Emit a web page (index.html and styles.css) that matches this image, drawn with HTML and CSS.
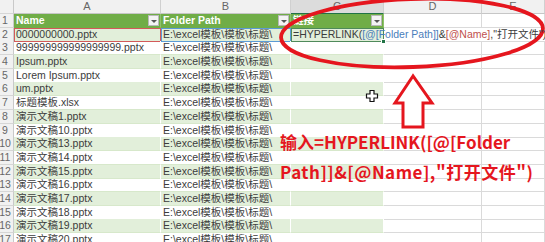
FILE: index.html
```html
<!DOCTYPE html>
<html lang="zh-CN">
<head>
  <meta charset="UTF-8" />
  <title>HYPERLINK</title>
  <link rel="stylesheet" href="styles.css">
</head>
<body>

<div class="sheet">
  <div class="row col-head">
    <div class="num corner"></div>
    <div class="letter">A</div>
    <div class="letter">B</div>
    <div class="letter active">C</div>
    <div class="letter">D</div>
    <div class="letter">E</div>
  </div>

  <div class="row tbl-head">
    <div class="num">1</div>
    <div class="cell th">Name<span class="drop"></span></div>
    <div class="cell th">Folder Path<span class="drop"></span></div>
    <div class="cell th">链接<span class="drop"></span></div>
    <div class="cell"></div>
    <div class="cell"></div>
  </div>

  <div class="row band">
    <div class="num">2</div>
    <div class="cell t ref-name">0000000000.pptx</div>
    <div class="cell t ref-path">E:\excel模板\模板\标题\</div>
    <div class="cell t editing">=HYPERLINK(<span class="blue">[@[Folder Path]]</span>&amp;<span class="red">[@Name]</span>,"打开文件")<span class="handle"></span></div>
    <div class="cell no-line"></div>
    <div class="cell no-line"></div>
  </div>

  <div class="row">
    <div class="num">3</div>
    <div class="cell t">999999999999999999.pptx</div>
    <div class="cell t">E:\excel模板\模板\标题\</div>
    <div class="cell t"></div>
    <div class="cell"></div>
    <div class="cell"></div>
  </div>
  <div class="row band">
    <div class="num">4</div>
    <div class="cell t">Ipsum.pptx</div>
    <div class="cell t">E:\excel模板\模板\标题\</div>
    <div class="cell t"></div>
    <div class="cell"></div>
    <div class="cell"></div>
  </div>
  <div class="row">
    <div class="num">5</div>
    <div class="cell t">Lorem Ipsum.pptx</div>
    <div class="cell t">E:\excel模板\模板\标题\</div>
    <div class="cell t"></div>
    <div class="cell"></div>
    <div class="cell"></div>
  </div>
  <div class="row band">
    <div class="num">6</div>
    <div class="cell t">um.pptx</div>
    <div class="cell t">E:\excel模板\模板\标题\</div>
    <div class="cell t"></div>
    <div class="cell"></div>
    <div class="cell"></div>
  </div>
  <div class="row">
    <div class="num">7</div>
    <div class="cell t">标题模板.xlsx</div>
    <div class="cell t">E:\excel模板\模板\标题\</div>
    <div class="cell t"></div>
    <div class="cell"></div>
    <div class="cell"></div>
  </div>
  <div class="row band">
    <div class="num">8</div>
    <div class="cell t">演示文稿1.pptx</div>
    <div class="cell t">E:\excel模板\模板\标题\</div>
    <div class="cell t"></div>
    <div class="cell"></div>
    <div class="cell"></div>
  </div>
  <div class="row">
    <div class="num">9</div>
    <div class="cell t">演示文稿10.pptx</div>
    <div class="cell t">E:\excel模板\模板\标题\</div>
    <div class="cell t"></div>
    <div class="cell"></div>
    <div class="cell"></div>
  </div>
  <div class="row band">
    <div class="num">10</div>
    <div class="cell t">演示文稿13.pptx</div>
    <div class="cell t">E:\excel模板\模板\标题\</div>
    <div class="cell t"></div>
    <div class="cell"></div>
    <div class="cell"></div>
  </div>
  <div class="row">
    <div class="num">11</div>
    <div class="cell t">演示文稿14.pptx</div>
    <div class="cell t">E:\excel模板\模板\标题\</div>
    <div class="cell t"></div>
    <div class="cell"></div>
    <div class="cell"></div>
  </div>
  <div class="row band">
    <div class="num">12</div>
    <div class="cell t">演示文稿15.pptx</div>
    <div class="cell t">E:\excel模板\模板\标题\</div>
    <div class="cell t"></div>
    <div class="cell"></div>
    <div class="cell"></div>
  </div>
  <div class="row">
    <div class="num">13</div>
    <div class="cell t">演示文稿16.pptx</div>
    <div class="cell t">E:\excel模板\模板\标题\</div>
    <div class="cell t"></div>
    <div class="cell"></div>
    <div class="cell"></div>
  </div>
  <div class="row band">
    <div class="num">14</div>
    <div class="cell t">演示文稿17.pptx</div>
    <div class="cell t">E:\excel模板\模板\标题\</div>
    <div class="cell t"></div>
    <div class="cell"></div>
    <div class="cell"></div>
  </div>
  <div class="row">
    <div class="num">15</div>
    <div class="cell t">演示文稿18.pptx</div>
    <div class="cell t">E:\excel模板\模板\标题\</div>
    <div class="cell t"></div>
    <div class="cell"></div>
    <div class="cell"></div>
  </div>
  <div class="row band">
    <div class="num">16</div>
    <div class="cell t">演示文稿19.pptx</div>
    <div class="cell t">E:\excel模板\模板\标题\</div>
    <div class="cell t"></div>
    <div class="cell"></div>
    <div class="cell"></div>
  </div>
  <div class="row">
    <div class="num">17</div>
    <div class="cell t">演示文稿20.pptx</div>
    <div class="cell t">E:\excel模板\模板\标题\</div>
    <div class="cell t"></div>
    <div class="cell"></div>
    <div class="cell"></div>
  </div>
</div>

<svg class="marks" width="545" height="242" viewBox="0 0 545 242">
  <ellipse cx="412" cy="33" rx="131" ry="34" transform="rotate(-2 412 33)" fill="none" stroke="#e5161e" stroke-width="3.8" />
  <polygon points="413,76 395,103 403,103 403,127 423,127 423,103 432,103" fill="#fff" stroke="#e5161e" stroke-width="3" stroke-linejoin="miter" />
  <path d="M370 90.5 h4 v3.5 h3.5 v4 h-3.5 v3.5 h-4 v-3.5 h-3.5 v-4 h3.5 z" fill="#fff" stroke="#111" stroke-width="1.2" />
</svg>

<div class="note">
  <p>输入=HYPERLINK([@[Folder</p>
  <p class="wide">Path]]&amp;[@Name],"打开文件")</p>
</div>

</body>
</html>
```

FILE: styles.css
```css
* {
  box-sizing: border-box;
}

body {
  margin: 0;
  width: 545px;
  height: 242px;
  overflow: hidden;
  position: relative;
  background: #fff;
  font-family: 'Liberation Sans', 'Noto Sans CJK SC', sans-serif;
  font-size: 10.5px;
  color: #3c3c3c;
}

.sheet {
  display: flex;
  flex-direction: column;
}

.row {
  display: grid;
  grid-template-columns: 14px 147px 130px 93px 98px 63px;
  height: 13.7px;
  flex-shrink: 0;
}

.col-head {
  height: 14px;
}

.num {
  background: #f1f1f1;
  border-right: 1px solid #c9c9c9;
  border-bottom: 1px solid #d6d6d6;
  color: #666;
  font-size: 10.5px;
  line-height: 13px;
  display: flex;
  justify-content: center;
  padding-right: 3px;
  white-space: nowrap;
}

.letter {
  background: #f1f1f1;
  border-right: 1px solid #d0d0d0;
  border-bottom: 1px solid #c6c6c6;
  color: #666;
  font-size: 11px;
  line-height: 13px;
  text-align: center;
}

.letter.active {
  background: #dcdcdc;
  border-bottom: 1px solid #217346;
}

.cell {
  position: relative;
  border-right: 1px solid #dadada;
  border-bottom: 1px solid #dadada;
  line-height: 13px;
  padding-left: 2px;
  white-space: nowrap;
  overflow: hidden;
}

.cell.t {
  border-right: 1px solid #fff;
  border-bottom: 1px solid #d7e8cb;
}

.band .cell.t {
  background: #e2efda;
}

.tbl-head .th {
  background: #70ad47;
  color: #fff;
  font-weight: bold;
  border-right: 1px solid #8fc16b;
  border-bottom: 1px solid #70ad47;
}

.drop {
  position: absolute;
  right: 1px;
  top: 1px;
  width: 11px;
  height: 11px;
  background: #f3f3f3;
  border: 1px solid #b8b8b8;
}

.drop::after {
  content: "";
  position: absolute;
  left: 2px;
  top: 4px;
  border-left: 3px solid transparent;
  border-right: 3px solid transparent;
  border-top: 3px solid #555;
}

.band .ref-name {
  background: #e5e1d5;
  border: 1px solid #d35a5a;
  padding-left: 1px;
  line-height: 11px;
}

.band .ref-path {
  background: #dde9ec;
  border: 1px solid #5b9bd5;
  padding-left: 1px;
  line-height: 11px;
}

.band .editing {
  background: #fff;
  border: 1px solid #4f8a5b;
  overflow: visible;
  z-index: 2;
  line-height: 11px;
  padding-left: 1px;
}

.blue {
  color: #4a7ebb;
}

.red {
  color: #c0504d;
}

.handle {
  position: absolute;
  right: -3px;
  bottom: -3px;
  width: 5px;
  height: 5px;
  background: #217346;
  border: 1px solid #fff;
}

.no-line {
  border-right-color: transparent;
}

.marks {
  position: absolute;
  left: 0;
  top: 0;
  pointer-events: none;
}

.note {
  position: absolute;
  left: 280px;
  top: 127px;
  color: #e5161e;
  font-family: 'Noto Sans CJK SC', sans-serif;
  font-weight: bold;
  font-size: 17px;
  line-height: 30px;
}

.note p {
  margin: 0;
  white-space: nowrap;
}

.note .wide {
  letter-spacing: 0.5px;
}
```
